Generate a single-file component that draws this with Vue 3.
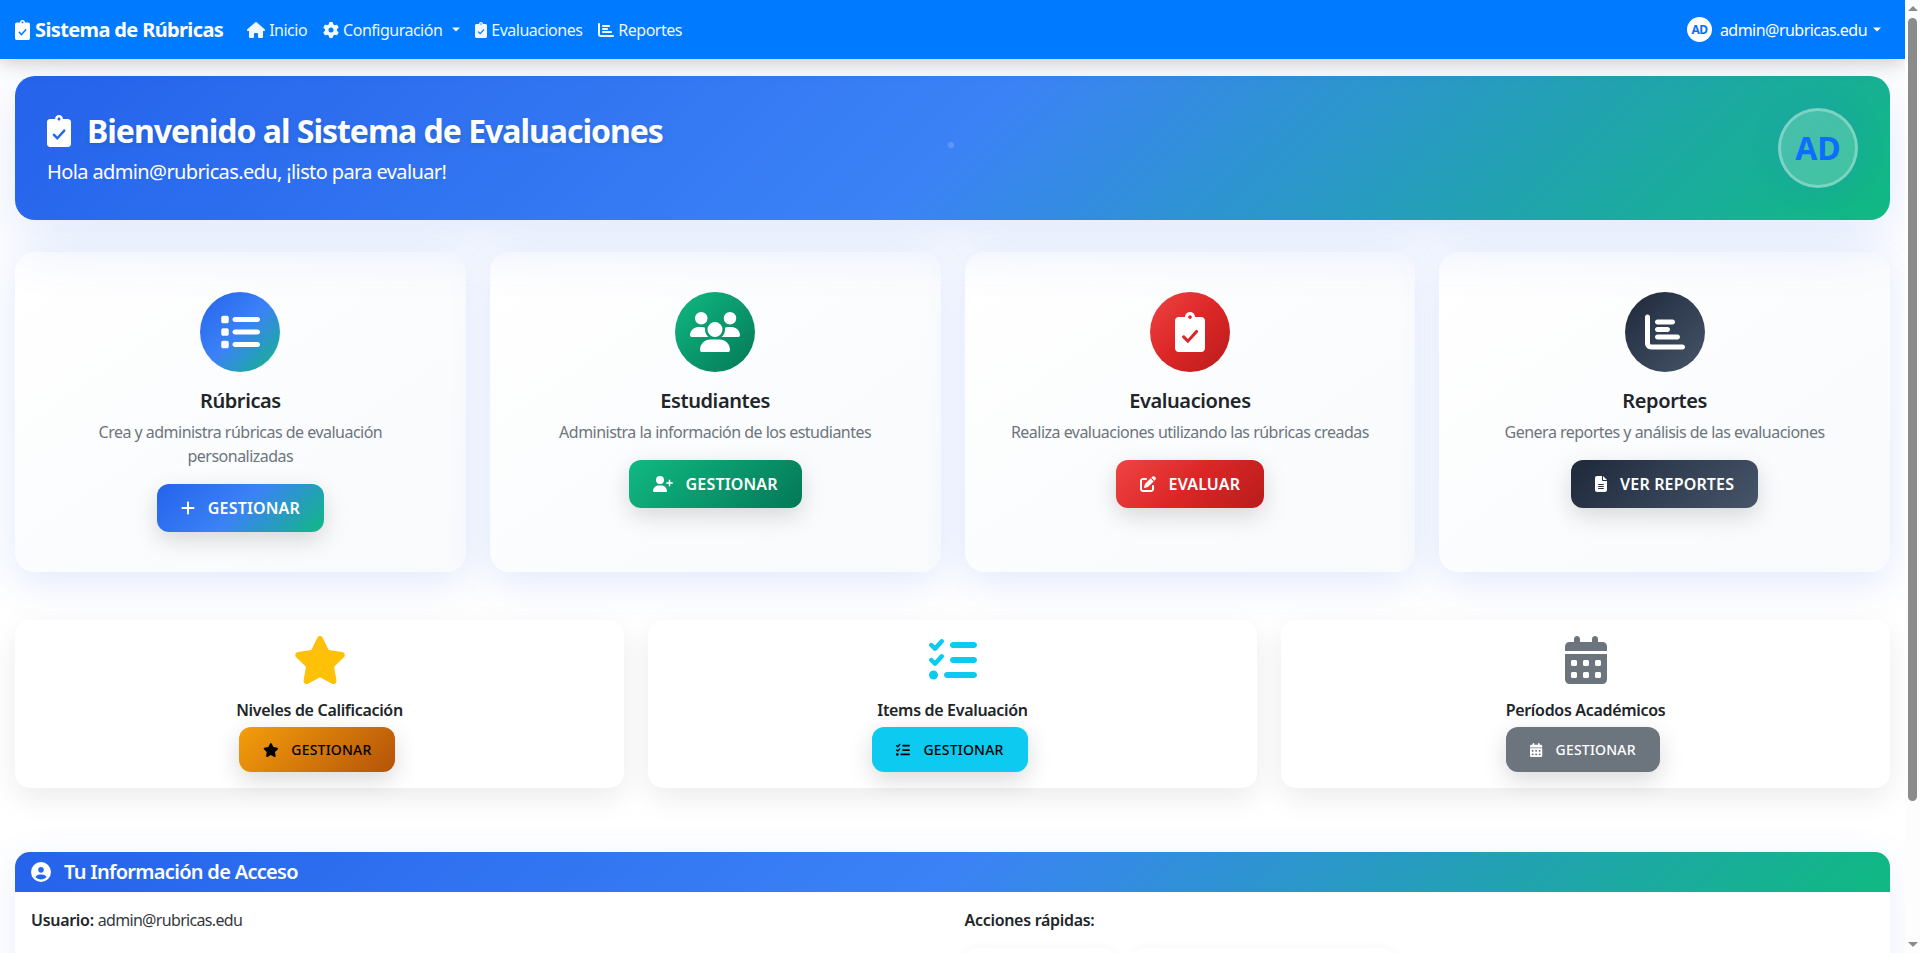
<script setup>
const ic = {
  clip: ['0 0 384 512', 'M336 64h-80c0-35.3-28.7-64-64-64s-64 28.7-64 64H48C21.5 64 0 85.5 0 112v352c0 26.5 21.5 48 48 48h288c26.5 0 48-21.5 48-48V112c0-26.5-21.5-48-48-48zM192 40c13.3 0 24 10.7 24 24s-10.7 24-24 24-24-10.7-24-24 10.7-24 24-24zM122 301L165 344L261.2 236.5A20 20 0 0 1 290.8 263.5L165 400L94 329A20 20 0 0 1 122 301z'],
  house: ['0 0 576 512', 'M575.8 255.5c0 18-15 32.1-32 32.1h-32l.7 160.2c0 2.7-.2 5.4-.5 8.1V472c0 22.1-17.9 40-40 40H456c-1.1 0-2.2 0-3.3-.1c-1.4 .1-2.8 .1-4.2 .1H416 392c-22.1 0-40-17.9-40-40V448 384c0-17.7-14.3-32-32-32H256c-17.7 0-32 14.3-32 32v64 24c0 22.1-17.9 40-40 40H160 128.1c-1.5 0-3-.1-4.5-.2c-1.2 .1-2.4 .2-3.6 .2H104c-22.1 0-40-17.9-40-40V360c0-.9 0-1.9 .1-2.8V287.6H32c-18 0-32-14-32-32.1c0-9 3-17 10-24L266.4 8c7-7 15-8 22-8s15 2 21 7L564.8 231.5c8 7 12 15 11 24z'],
  gear: ['0 0 512 512', 'M495.9 166.6c3.2 8.7 .5 18.4-6.4 24.6l-43.3 39.4c1.1 8.3 1.7 16.8 1.7 25.4s-.6 17.1-1.7 25.4l43.3 39.4c6.9 6.2 9.6 15.9 6.4 24.6c-4.4 11.9-9.7 23.3-15.8 34.3l-4.7 8.1c-6.6 11-14 21.4-22.1 31.2c-5.9 7.2-15.7 9.6-24.5 6.8l-55.7-17.7c-13.4 10.3-28.2 18.9-44 25.4l-12.5 57.1c-2 9.1-9 16.3-18.2 17.8c-13.8 2.3-28 3.5-42.5 3.5s-28.7-1.2-42.5-3.5c-9.2-1.5-16.2-8.7-18.2-17.8l-12.5-57.1c-15.8-6.5-30.6-15.1-44-25.4L83.1 425.9c-8.8 2.8-18.6 .3-24.5-6.8c-8.1-9.8-15.5-20.2-22.1-31.2l-4.7-8.1c-6.1-11-11.4-22.4-15.8-34.3c-3.2-8.7-.5-18.4 6.4-24.6l43.3-39.4C64.6 273.1 64 264.6 64 256s.6-17.1 1.7-25.4L22.4 191.2c-6.9-6.2-9.6-15.9-6.4-24.6c4.4-11.9 9.7-23.3 15.8-34.3l4.7-8.1c6.6-11 14-21.4 22.1-31.2c5.9-7.2 15.7-9.6 24.5-6.8l55.7 17.7c13.4-10.3 28.2-18.9 44-25.4l12.5-57.1c2-9.1 9-16.3 18.2-17.8C227.3 1.2 241.5 0 256 0s28.7 1.2 42.5 3.5c9.2 1.5 16.2 8.7 18.2 17.8l12.5 57.1c15.8 6.5 30.6 15.1 44 25.4l55.7-17.7c8.8-2.8 18.6-.3 24.5 6.8c8.1 9.8 15.5 20.2 22.1 31.2l4.7 8.1c6.1 11 11.4 22.4 15.8 34.3zM256 336a80 80 0 1 0 0-160 80 80 0 1 0 0 160z'],
  bars: ['0 0 512 512', 'M32 32c17.7 0 32 14.3 32 32V400c0 8.8 7.2 16 16 16H480c17.7 0 32 14.3 32 32s-14.3 32-32 32H80c-44.2 0-80-35.8-80-80V64C0 46.3 14.3 32 32 32zm96 96c0-17.7 14.3-32 32-32l192 0c17.7 0 32 14.3 32 32s-14.3 32-32 32l-192 0c-17.7 0-32-14.3-32-32zm32 64H288c17.7 0 32 14.3 32 32s-14.3 32-32 32H160c-17.7 0-32-14.3-32-32s14.3-32 32-32zm0 96H416c17.7 0 32 14.3 32 32s-14.3 32-32 32H160c-17.7 0-32-14.3-32-32s14.3-32 32-32z'],
  list: ['0 0 512 512', 'M40 48C26.7 48 16 58.7 16 72v48c0 13.3 10.7 24 24 24H88c13.3 0 24-10.7 24-24V72c0-13.3-10.7-24-24-24H40zM192 64c-17.7 0-32 14.3-32 32s14.3 32 32 32H480c17.7 0 32-14.3 32-32s-14.3-32-32-32H192zm0 160c-17.7 0-32 14.3-32 32s14.3 32 32 32H480c17.7 0 32-14.3 32-32s-14.3-32-32-32H192zm0 160c-17.7 0-32 14.3-32 32s14.3 32 32 32H480c17.7 0 32-14.3 32-32s-14.3-32-32-32H192zM16 232v48c0 13.3 10.7 24 24 24H88c13.3 0 24-10.7 24-24V232c0-13.3-10.7-24-24-24H40c-13.3 0-24 10.7-24 24zM40 368c-13.3 0-24 10.7-24 24v48c0 13.3 10.7 24 24 24H88c13.3 0 24-10.7 24-24V392c0-13.3-10.7-24-24-24H40z'],
  users: ['0 0 640 512', 'M144 0a80 80 0 1 1 0 160A80 80 0 1 1 144 0zM512 0a80 80 0 1 1 0 160A80 80 0 1 1 512 0zM0 298.7C0 239.8 47.8 192 106.7 192h42.7c15.9 0 31 3.5 44.6 9.7c-1.3 7.2-1.9 14.7-1.9 22.3c0 38.2 16.8 72.5 43.3 96c-.2 0-.4 0-.7 0H21.3C9.6 320 0 310.4 0 298.7zM405.3 320c-.2 0-.4 0-.7 0c26.6-23.5 43.3-57.8 43.3-96c0-7.6-.7-15-1.9-22.3c13.6-6.3 28.7-9.7 44.6-9.7h42.7C592.2 192 640 239.8 640 298.7c0 11.8-9.6 21.3-21.3 21.3H405.3zM224 224a96 96 0 1 1 192 0 96 96 0 1 1 -192 0zM128 485.3C128 411.7 187.7 352 261.3 352H378.7C452.3 352 512 411.7 512 485.3c0 14.7-11.9 26.7-26.7 26.7H154.7c-14.7 0-26.7-11.9-26.7-26.7z'],
  userPlus: ['0 0 640 512', 'M96 128a128 128 0 1 1 256 0A128 128 0 1 1 96 128zM0 482.3C0 383.8 79.8 304 178.3 304h91.4C368.2 304 448 383.8 448 482.3c0 16.4-13.3 29.7-29.7 29.7H29.7C13.3 512 0 498.7 0 482.3zM504 312V248H440c-13.3 0-24-10.7-24-24s10.7-24 24-24h64V136c0-13.3 10.7-24 24-24s24 10.7 24 24v64h64c13.3 0 24 10.7 24 24s-10.7 24-24 24H552v64c0 13.3-10.7 24-24 24s-24-10.7-24-24z'],
  plus: ['0 0 448 512', 'M256 80c0-17.7-14.3-32-32-32s-32 14.3-32 32V224H48c-17.7 0-32 14.3-32 32s14.3 32 32 32H192V432c0 17.7 14.3 32 32 32s32-14.3 32-32V288H400c17.7 0 32-14.3 32-32s-14.3-32-32-32H256V80z'],
  pen: ['0 0 512 512', 'M471.6 21.7c-21.9-21.9-57.3-21.9-79.2 0L362.3 51.7l97.9 97.9 30.1-30.1c21.9-21.9 21.9-57.3 0-79.2L471.6 21.7zm-299.2 220c-6.1 6.1-10.8 13.6-13.5 21.9l-29.6 88.8c-2.9 8.6-.6 18.1 5.8 24.6s15.9 8.7 24.6 5.8l88.8-29.6c8.2-2.7 15.7-7.4 21.9-13.5L437.7 172.3 339.7 74.3 172.4 241.7zM96 64C43 64 0 107 0 160V416c0 53 43 96 96 96H352c53 0 96-43 96-96V320c0-17.7-14.3-32-32-32s-32 14.3-32 32v96c0 17.7-14.3 32-32 32H96c-17.7 0-32-14.3-32-32V160c0-17.7 14.3-32 32-32h96c17.7 0 32-14.3 32-32s-14.3-32-32-32H96z'],
  file: ['0 0 384 512', 'M64 0C28.7 0 0 28.7 0 64V448c0 35.3 28.7 64 64 64H320c35.3 0 64-28.7 64-64V160H256c-17.7 0-32-14.3-32-32V0H64zM256 0V128H384L256 0zM112 256H272c8.8 0 16 7.2 16 16s-7.2 16-16 16H112c-8.8 0-16-7.2-16-16s7.2-16 16-16zm0 64H272c8.8 0 16 7.2 16 16s-7.2 16-16 16H112c-8.8 0-16-7.2-16-16s7.2-16 16-16zm0 64H272c8.8 0 16 7.2 16 16s-7.2 16-16 16H112c-8.8 0-16-7.2-16-16s7.2-16 16-16z'],
  star: ['0 0 576 512', 'M316.9 18C311.6 7 300.4 0 288.1 0s-23.4 7-28.8 18L195 150.3 51.4 171.5c-12 1.8-22 10.2-25.7 21.7s-.7 24.2 7.9 32.7L137.8 329 113.2 474.7c-2 12 3 24.2 12.9 31.3s23 8 33.8 2.3l128.3-68.5 128.3 68.5c10.8 5.7 23.9 4.9 33.8-2.3s14.9-19.3 12.9-31.3L438.5 329 542.7 225.9c8.6-8.5 11.7-21.2 7.9-32.7s-13.7-19.9-25.7-21.7L381.2 150.3 316.9 18z'],
  check: ['0 0 512 512', 'M152.1 38.2c9.9 8.9 10.7 24 1.8 33.9l-72 80c-4.4 4.9-10.6 7.8-17.2 7.9s-12.9-2.4-17.6-7L7 113C-2.3 103.6-2.3 88.4 7 79s24.6-9.4 33.9 0l22.1 22.1 55.1-61.2c8.9-9.9 24-10.7 33.9-1.8zm0 160c9.9 8.9 10.7 24 1.8 33.9l-72 80c-4.4 4.9-10.6 7.8-17.2 7.9s-12.9-2.4-17.6-7L7 273c-9.4-9.4-9.4-24.6 0-33.9s24.6-9.4 33.9 0l22.1 22.1 55.1-61.2c8.9-9.9 24-10.7 33.9-1.8zM224 96c0-17.7 14.3-32 32-32H480c17.7 0 32 14.3 32 32s-14.3 32-32 32H256c-17.7 0-32-14.3-32-32zm0 160c0-17.7 14.3-32 32-32H480c17.7 0 32 14.3 32 32s-14.3 32-32 32H256c-17.7 0-32-14.3-32-32zM160 416c0-17.7 14.3-32 32-32H480c17.7 0 32 14.3 32 32s-14.3 32-32 32H192c-17.7 0-32-14.3-32-32zM48 368a48 48 0 1 1 0 96 48 48 0 1 1 0-96z'],
  cal: ['0 0 448 512', 'M128 0c17.7 0 32 14.3 32 32V64H288V32c0-17.7 14.3-32 32-32s32 14.3 32 32V64h48c26.5 0 48 21.5 48 48v48H0V112C0 85.5 21.5 64 48 64H96V32c0-17.7 14.3-32 32-32zM0 192H448V464c0 26.5-21.5 48-48 48H48c-26.5 0-48-21.5-48-48V192zm64 80v32c0 8.8 7.2 16 16 16h32c8.8 0 16-7.2 16-16V272c0-8.8-7.2-16-16-16H80c-8.8 0-16 7.2-16 16zm128 0v32c0 8.8 7.2 16 16 16h32c8.8 0 16-7.2 16-16V272c0-8.8-7.2-16-16-16H208c-8.8 0-16 7.2-16 16zm144-16c-8.8 0-16 7.2-16 16v32c0 8.8 7.2 16 16 16h32c8.8 0 16-7.2 16-16V272c0-8.8-7.2-16-16-16H336zM64 400v32c0 8.8 7.2 16 16 16h32c8.8 0 16-7.2 16-16V400c0-8.8-7.2-16-16-16H80c-8.8 0-16 7.2-16 16zm144-16c-8.8 0-16 7.2-16 16v32c0 8.8 7.2 16 16 16h32c8.8 0 16-7.2 16-16V400c0-8.8-7.2-16-16-16H208zm112 16v32c0 8.8 7.2 16 16 16h32c8.8 0 16-7.2 16-16V400c0-8.8-7.2-16-16-16H336c-8.8 0-16 7.2-16 16z'],
  user: ['0 0 512 512', 'M399 384.2C376.9 345.8 335.4 320 288 320H224c-47.4 0-88.9 25.8-111 64.2c35.2 39.2 86.2 63.8 143 63.8s107.8-24.7 143-63.8zM0 256a256 256 0 1 1 512 0A256 256 0 1 1 0 256zm256 16a72 72 0 1 0 0-144 72 72 0 1 0 0 144z']
}

const navLinks = [
  { icon: ic.house, text: 'Inicio' },
  { icon: ic.gear, text: 'Configuración', caret: true },
  { icon: ic.clip, text: 'Evaluaciones' },
  { icon: ic.bars, text: 'Reportes' }
]

const cards = [
  { title: 'Rúbricas', desc: 'Crea y administra rúbricas de evaluación personalizadas', icon: ic.list, btnIcon: ic.plus, btn: 'Gestionar', tone: 'blue' },
  { title: 'Estudiantes', desc: 'Administra la información de los estudiantes', icon: ic.users, btnIcon: ic.userPlus, btn: 'Gestionar', tone: 'green' },
  { title: 'Evaluaciones', desc: 'Realiza evaluaciones utilizando las rúbricas creadas', icon: ic.clip, btnIcon: ic.pen, btn: 'Evaluar', tone: 'red' },
  { title: 'Reportes', desc: 'Genera reportes y análisis de las evaluaciones', icon: ic.bars, btnIcon: ic.file, btn: 'Ver reportes', tone: 'dark' }
]

const smallCards = [
  { title: 'Niveles de Calificación', icon: ic.star, tone: 'warn' },
  { title: 'Items de Evaluación', icon: ic.check, tone: 'cyan' },
  { title: 'Períodos Académicos', icon: ic.cal, tone: 'gray' }
]
</script>

<template>
  <div class="shell">
    <div class="page">
      <nav class="navbar">
        <a class="brand">
          <svg class="ico" :viewBox="ic.clip[0]"><path :d="ic.clip[1]" /></svg>
          Sistema de Rúbricas
        </a>
        <a v-for="link in navLinks" :key="link.text" class="nav-link">
          <svg class="ico" :viewBox="link.icon[0]"><path :d="link.icon[1]" /></svg>
          <span>{{ link.text }}</span>
          <i v-if="link.caret" class="caret"></i>
        </a>
        <a class="nav-user">
          <span class="nav-avatar">AD</span>
          <span>admin@rubricas.edu</span>
          <i class="caret"></i>
        </a>
      </nav>

      <main class="content">
        <section class="hero">
          <div>
            <h1>
              <svg class="ico" :viewBox="ic.clip[0]"><path :d="ic.clip[1]" /></svg>
              Bienvenido al Sistema de Evaluaciones
            </h1>
            <p>Hola admin@rubricas.edu, ¡listo para evaluar!</p>
          </div>
          <div class="hero-avatar">AD</div>
          <span class="ripple"></span>
        </section>

        <section class="cards">
          <article v-for="card in cards" :key="card.title" class="card">
            <div class="circle" :class="card.tone">
              <svg class="ico" :viewBox="card.icon[0]"><path :d="card.icon[1]" /></svg>
            </div>
            <h3>{{ card.title }}</h3>
            <p>{{ card.desc }}</p>
            <button class="btn" :class="card.tone" type="button">
              <svg class="ico" :viewBox="card.btnIcon[0]"><path :d="card.btnIcon[1]" /></svg>
              {{ card.btn }}
            </button>
          </article>
        </section>

        <section class="small-cards">
          <article v-for="card in smallCards" :key="card.title" class="small-card" :class="card.tone">
            <svg class="ico big" :viewBox="card.icon[0]"><path :d="card.icon[1]" /></svg>
            <h5>{{ card.title }}</h5>
            <button class="btn small" :class="card.tone" type="button">
              <svg class="ico" :viewBox="card.icon[0]"><path :d="card.icon[1]" /></svg>
              Gestionar
            </button>
          </article>
        </section>

        <section class="access">
          <header class="access-head">
            <svg class="ico" :viewBox="ic.user[0]"><path :d="ic.user[1]" /></svg>
            Tu Información de Acceso
          </header>
          <div class="access-body">
            <div><strong>Usuario:</strong> <span class="value">admin@rubricas.edu</span></div>
            <div>
              <strong>Acciones rápidas:</strong>
              <div class="actions">
                <span class="action first"></span>
                <span class="action second"></span>
              </div>
            </div>
          </div>
        </section>
      </main>
    </div>

    <div class="scrollbar">
      <i class="arrow up"></i>
      <div class="thumb"></div>
      <i class="arrow down"></i>
    </div>
  </div>
</template>

<style>
html, body {
  margin: 0;
  height: 100%;
  overflow: hidden;
  background: #fff;
}
</style>

<style scoped>
.shell {
  display: flex;
  height: 953px;
  overflow: hidden;
  font-family: "Noto Sans", "Open Sans", sans-serif;
  font-size: 16px;
  line-height: 1.5;
  color: #212529;
}

.page {
  flex: 1;
  min-width: 0;
  overflow: hidden;
  background: #fff;
}

.ico {
  height: 1em;
  width: auto;
  fill: currentColor;
  flex: none;
}

/* navbar */
.navbar {
  position: relative;
  z-index: 2;
  display: flex;
  align-items: center;
  height: 59px;
  padding: 0 15px;
  background: #007bff;
  color: #fff;
  box-shadow: 0 4px 20px rgba(0, 0, 0, .2);
  box-sizing: border-box;
}

.brand {
  display: flex;
  align-items: center;
  gap: 5px;
  font-size: 20px;
  font-weight: 700;
  letter-spacing: -.63px;
  margin-right: 16px;
  white-space: nowrap;
}

.nav-link {
  display: flex;
  align-items: center;
  gap: 4px;
  padding: 8px;
  letter-spacing: -.5px;
  color: rgba(255, 255, 255, .95);
}

.caret {
  display: inline-block;
  margin-left: 5px;
  margin-right: -2px;
  border-top: 5px solid;
  border-left: 5px solid transparent;
  border-right: 5px solid transparent;
  transform: scale(.8);
}

.nav-user {
  margin-left: auto;
  display: flex;
  align-items: center;
  gap: 8px;
  padding-right: 8px;
  letter-spacing: -.53px;
}

.nav-user .caret {
  margin: 0 0 0 -3px;
}

.nav-avatar {
  display: flex;
  align-items: center;
  justify-content: center;
  width: 25px;
  height: 25px;
  border-radius: 50%;
  background: #fff;
  color: #0d6efd;
  font-size: 12px;
  font-weight: 700;
  letter-spacing: -.5px;
}

/* content */
.content {
  padding: 17px 15px 0;
}

.hero {
  position: relative;
  display: flex;
  align-items: center;
  justify-content: space-between;
  height: 144px;
  padding: 0 32px;
  box-sizing: border-box;
  border-radius: 20px;
  color: #fff;
  background: linear-gradient(135deg, #2563eb 0%, #3b82f6 50%, #10b981 100%);
  box-shadow: 0 20px 60px rgba(37, 99, 235, .15);
}

.hero h1 {
  display: flex;
  align-items: center;
  gap: 16px;
  margin: 3px 0 7px;
  font-size: 32px;
  font-weight: 700;
  line-height: 1.2;
  letter-spacing: -1.02px;
  text-shadow: 0 2px 4px rgba(0, 0, 0, .1);
}

.hero p {
  margin: 0;
  font-size: 20px;
  letter-spacing: -.62px;
}

.hero-avatar {
  display: flex;
  align-items: center;
  justify-content: center;
  width: 80px;
  height: 80px;
  box-sizing: border-box;
  border-radius: 50%;
  border: 3px solid rgba(255, 255, 255, .3);
  background: rgba(255, 255, 255, .2);
  color: #0d6efd;
  font-size: 32px;
  font-weight: 700;
  box-shadow: 0 0 30px rgba(37, 99, 235, .15);
}

.ripple {
  position: absolute;
  left: 933px;
  top: 66px;
  width: 6px;
  height: 6px;
  border-radius: 50%;
  background: rgba(255, 255, 255, .18);
}

.cards {
  display: grid;
  grid-template-columns: repeat(4, 1fr);
  gap: 24px;
  margin-top: 32px;
}

.card {
  display: flex;
  flex-direction: column;
  align-items: center;
  padding: 40px;
  border-radius: 20px;
  text-align: center;
  background: linear-gradient(145deg, #fff, #f8fafc);
  box-shadow: 0 10px 40px rgba(37, 99, 235, .15);
}

.circle {
  display: flex;
  align-items: center;
  justify-content: center;
  width: 80px;
  height: 80px;
  border-radius: 50%;
  color: #fff;
  font-size: 40px;
}

.card h3 {
  margin: 17px 0 7px;
  font-size: 20px;
  font-weight: 600;
  line-height: 1.2;
  letter-spacing: -.4px;
}

.card p {
  margin: 0 0 16px;
  color: #6c757d;
  letter-spacing: -.52px;
}

.btn {
  display: inline-flex;
  align-items: center;
  gap: 13px;
  padding: 12px 24px;
  border: 0;
  border-radius: 12px;
  font-family: inherit;
  font-size: 16px;
  font-weight: 600;
  line-height: 24px;
  letter-spacing: .15px;
  text-transform: uppercase;
  color: #fff;
  box-shadow: 0 8px 25px rgba(0, 0, 0, .15);
}

.blue { background: linear-gradient(135deg, #2563eb 0%, #3b82f6 50%, #10b981 100%); }
.green { background: linear-gradient(135deg, #10b981, #047857); }
.red { background: linear-gradient(135deg, #ef4444, #dc2626 50%, #b91c1c); }
.dark { background: linear-gradient(135deg, #1e293b, #475569); }

.small-cards {
  display: grid;
  grid-template-columns: repeat(3, 1fr);
  gap: 24px;
  margin-top: 48px;
}

.small-card {
  display: flex;
  flex-direction: column;
  align-items: center;
  padding: 16px;
  border-radius: 15px;
  background: #fff;
  box-shadow: 0 10px 30px rgba(0, 0, 0, .08);
}

.small-card .big {
  font-size: 48px;
}

.small-card.warn .big { color: #ffc107; }
.small-card.cyan .big { color: #0dcaf0; }
.small-card.gray .big { color: #6c757d; }

.small-card h5 {
  margin: 17px 0 7px;
  font-size: 16px;
  font-weight: 600;
  line-height: 1.2;
  letter-spacing: -.32px;
}

.btn.small {
  margin-right: 5px;
  font-size: 14px;
  font-weight: 500;
  line-height: 21px;
  letter-spacing: .2px;
}

.btn.warn { background: linear-gradient(135deg, #f59e0b, #b45309); color: #000; }
.btn.cyan { background: #0dcaf0; color: #000; }
.btn.gray { background: #6c757d; color: #fff; }

.access {
  margin-top: 64px;
  border-radius: 15px;
  background: #fff;
  box-shadow: 0 10px 40px rgba(37, 99, 235, .1);
}

.access-head {
  display: flex;
  align-items: center;
  gap: 13px;
  height: 40px;
  padding: 0 16px;
  border-radius: 15px 15px 0 0;
  font-size: 20px;
  font-weight: 600;
  letter-spacing: -.7px;
  color: #fff;
  background: linear-gradient(135deg, #2563eb 0%, #3b82f6 50%, #10b981 100%);
}

.access-body {
  display: grid;
  grid-template-columns: 1fr 1fr;
  gap: 24px;
  padding: 16px;
  letter-spacing: -.3px;
}

.access-body strong {
  font-weight: 600;
}

.value {
  letter-spacing: -.67px;
  color: #343a40;
}

.actions {
  display: flex;
  gap: 17px;
  margin-top: 16px;
}

.action {
  height: 48px;
  border-radius: 12px;
  background: #fff;
  box-shadow: 0 0 12px rgba(0, 0, 0, .04);
}

.action.first { width: 150px; }
.action.second { width: 262px; }

/* scrollbar */
.scrollbar {
  display: flex;
  flex-direction: column;
  align-items: center;
  flex: none;
  width: 15px;
  background: #fdfdfd;
}

.thumb {
  width: 9px;
  height: 783px;
  margin-top: 7px;
  margin-bottom: auto;
  border-radius: 5px;
  background: #8b8b8b;
}

.arrow {
  width: 0;
  height: 0;
  border-left: 5px solid transparent;
  border-right: 5px solid transparent;
}

.arrow.up {
  margin-top: 6px;
  border-bottom: 5px solid #8b8b8b;
}

.arrow.down {
  margin-bottom: 6px;
  border-top: 5px solid #8b8b8b;
}
</style>
